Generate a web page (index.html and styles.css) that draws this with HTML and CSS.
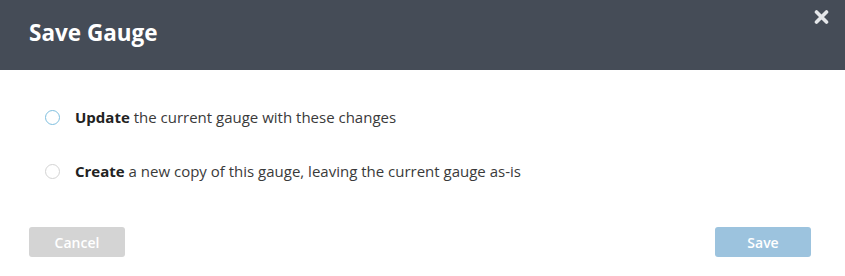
FILE: index.html
```html
<!DOCTYPE html>
<html>
<head>
<meta charset="utf-8">
<link rel="stylesheet" href="styles.css">
</head>
<body>
<div class="modal">
  <div class="header">
    <h1 class="title">Save Gauge</h1>
    <button class="close" aria-label="Close">
      <svg width="15" height="14" viewBox="0 0 15 14"><path d="M2.5 2 L12.5 12 M12.5 2 L2.5 12" stroke="#e4e6e9" stroke-width="3.6" stroke-linecap="round"/></svg>
    </button>
  </div>
  <div class="body">
    <label class="option">
      <span class="radio radio-active"></span>
      <span class="label"><b>Update</b> the current gauge with these changes</span>
    </label>
    <label class="option">
      <span class="radio"></span>
      <span class="label"><b>Create</b> a new copy of this gauge, leaving the current gauge as-is</span>
    </label>
  </div>
  <div class="footer">
    <button class="btn btn-cancel">Cancel</button>
    <button class="btn btn-save">Save</button>
  </div>
</div>
</body>
</html>
```
FILE: styles.css
```css
* { box-sizing: border-box; }
html, body { margin: 0; padding: 0; background: #fff; }
body { font-family: "Open Sans", Lato, sans-serif; color: #333; }
.modal { width: 845px; height: 276px; display: flex; flex-direction: column; }
.header {
  height: 70px;
  background: #454c57;
  display: flex;
  align-items: flex-start;
  justify-content: space-between;
  padding: 0 16px 0 29px;
}
.title {
  margin: 18px 0 0 0;
  font-size: 22.5px;
  font-weight: 700;
  color: #fff;
  line-height: 30px;
}
.close {
  margin-top: 10px;
  border: 0;
  background: none;
  padding: 0;
  width: 15px;
  height: 14px;
  display: block;
}
.close svg { display: block; }
.body {
  padding: 37px 0 0 45px;
  display: flex;
  flex-direction: column;
  gap: 34px;
}
.option { display: flex; align-items: center; height: 20px; }
.radio {
  width: 15px; height: 15px;
  border-radius: 50%;
  border: 1px solid #d3d3d3;
  background: #fff;
  margin-right: 15px;
  flex: none;
}
.radio-active { border-color: #7fbfdf; }
.label { font-size: 15px; color: #3a3a3a; line-height: 20px; }
.label b { font-weight: 700; color: #222; }
.footer {
  display: flex;
  justify-content: space-between;
  padding: 0 34px 0 29px;
  margin-top: 46px;
}
.btn {
  width: 96px; height: 30px;
  border: 0;
  border-radius: 3px;
  color: #fff;
  font-family: "Open Sans", Lato, sans-serif;
  font-size: 14px;
  font-weight: 600;
  padding: 0;
}
.btn-cancel { background: #d4d4d4; }
.btn-save { background: #9cc3de; }
```
